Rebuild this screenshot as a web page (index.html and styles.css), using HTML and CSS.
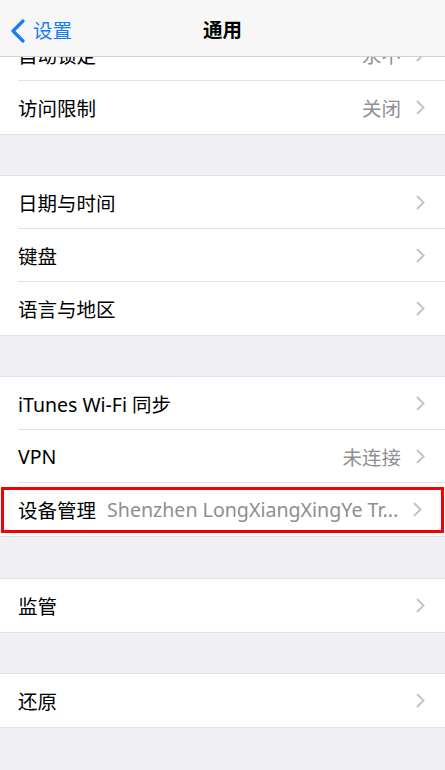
FILE: index.html
```html
<!DOCTYPE html>
<html lang="zh-CN">
<head>
<meta charset="utf-8">
<title>通用</title>
<link rel="stylesheet" href="styles.css">
</head>
<body>
<header class="navbar">
  <a class="back">
    <svg class="back-icon" width="16" height="24" viewBox="0 0 16 24"><path d="M13 2 L3 12 L13 22" fill="none" stroke="#1a7cf5" stroke-width="3.2" stroke-linecap="round" stroke-linejoin="round"/></svg>
    <span>设置</span>
  </a>
  <h1 class="title">通用</h1>
</header>
<main class="scroller">
  <div class="content">
  <section class="group group-first">
    <div class="row"><div class="row-inner"><span class="label">自动锁定</span><span class="value">永不</span><svg class="chev" width="9" height="15" viewBox="0 0 9 15"><path d="M1 1 L7.5 7.5 L1 14" fill="none" stroke="#c4c4c8" stroke-width="2"/></svg></div></div>
    <div class="row"><div class="row-inner"><span class="label">访问限制</span><span class="value">关闭</span><svg class="chev" width="9" height="15" viewBox="0 0 9 15"><path d="M1 1 L7.5 7.5 L1 14" fill="none" stroke="#c4c4c8" stroke-width="2"/></svg></div></div>
  </section>
  <section class="group">
    <div class="row"><div class="row-inner"><span class="label">日期与时间</span><svg class="chev" width="9" height="15" viewBox="0 0 9 15"><path d="M1 1 L7.5 7.5 L1 14" fill="none" stroke="#c4c4c8" stroke-width="2"/></svg></div></div>
    <div class="row"><div class="row-inner"><span class="label">键盘</span><svg class="chev" width="9" height="15" viewBox="0 0 9 15"><path d="M1 1 L7.5 7.5 L1 14" fill="none" stroke="#c4c4c8" stroke-width="2"/></svg></div></div>
    <div class="row"><div class="row-inner"><span class="label">语言与地区</span><svg class="chev" width="9" height="15" viewBox="0 0 9 15"><path d="M1 1 L7.5 7.5 L1 14" fill="none" stroke="#c4c4c8" stroke-width="2"/></svg></div></div>
  </section>
  <section class="group">
    <div class="row"><div class="row-inner"><span class="label">iTunes Wi-Fi 同步</span><svg class="chev" width="9" height="15" viewBox="0 0 9 15"><path d="M1 1 L7.5 7.5 L1 14" fill="none" stroke="#c4c4c8" stroke-width="2"/></svg></div></div>
    <div class="row"><div class="row-inner"><span class="label">VPN</span><span class="value">未连接</span><svg class="chev" width="9" height="15" viewBox="0 0 9 15"><path d="M1 1 L7.5 7.5 L1 14" fill="none" stroke="#c4c4c8" stroke-width="2"/></svg></div></div>
    <div class="row row-highlight"><div class="row-inner"><span class="label">设备管理</span><span class="value value-long">Shenzhen LongXiangXingYe Tr...</span><svg class="chev" width="9" height="15" viewBox="0 0 9 15"><path d="M1 1 L7.5 7.5 L1 14" fill="none" stroke="#c4c4c8" stroke-width="2"/></svg></div></div>
  </section>
  <section class="group group-gap-wide">
    <div class="row"><div class="row-inner"><span class="label">监管</span><svg class="chev" width="9" height="15" viewBox="0 0 9 15"><path d="M1 1 L7.5 7.5 L1 14" fill="none" stroke="#c4c4c8" stroke-width="2"/></svg></div></div>
  </section>
  <section class="group">
    <div class="row"><div class="row-inner"><span class="label">还原</span><svg class="chev" width="9" height="15" viewBox="0 0 9 15"><path d="M1 1 L7.5 7.5 L1 14" fill="none" stroke="#c4c4c8" stroke-width="2"/></svg></div></div>
  </section>
  </div>
</main>
</body>
</html>
```

FILE: styles.css
```css
*, *::before, *::after { box-sizing: border-box; }
html, body {
  margin: 0;
  padding: 0;
  background: #efeff4;
  font-family: "Noto Sans", "Noto Sans CJK SC", sans-serif;
  color: #000;
  width: 445px;
  height: 770px;
  overflow: hidden;
}
body {
  display: flex;
  flex-direction: column;
}
.navbar {
  position: relative;
  flex: 0 0 57px;
  height: 57px;
  background: #f7f7f8;
  border-bottom: 1px solid #d2d2d6;
  display: flex;
  align-items: center;
  justify-content: center;
}
.back {
  position: absolute;
  left: 10px;
  top: 19px;
  display: flex;
  align-items: center;
  gap: 7px;
  color: #1a7cf5;
  font-size: 19.5px;
  line-height: 24px;
}
.back-icon { display: block; }
.title {
  margin: 0;
  font-size: 19.5px;
  font-weight: 600;
  line-height: 24px;
  padding-top: 4px;
}
.scroller {
  flex: 1 1 auto;
  overflow: hidden;
}
.content {
  margin-top: -29px;
}
.group {
  background: #fff;
  margin-top: 42px;
  box-shadow: 0 -1px 0 #e0e0e4, 0 1px 0 #e0e0e4;
}
.group-first { margin-top: 0; }
.group-gap-wide { margin-top: 43px; }
.row {
  height: 53px;
  padding-left: 18px;
}
.row-inner {
  height: 53px;
  display: flex;
  align-items: center;
  padding-right: 20px;
  border-bottom: 1px solid #e2e2e6;
}
.row:last-child .row-inner { border-bottom: none; }
.label {
  font-size: 19.5px;
  white-space: nowrap;
  flex-shrink: 0;
}
.value {
  margin-left: auto;
  color: #8e8e93;
  font-size: 19.5px;
  white-space: nowrap;
  margin-right: 15px;
}
.value-long {
  margin-left: 11px;
  font-size: 19.6px;
  overflow: hidden;
}
.chev {
  margin-left: auto;
  flex-shrink: 0;
  display: block;
}
.value + .chev { margin-left: 0; }
.row-highlight {
  position: relative;
}
.row-highlight::after {
  content: "";
  position: absolute;
  left: 1px;
  top: 4px;
  width: 443px;
  height: 46px;
  border: 3.5px solid #f00300;
}
```
